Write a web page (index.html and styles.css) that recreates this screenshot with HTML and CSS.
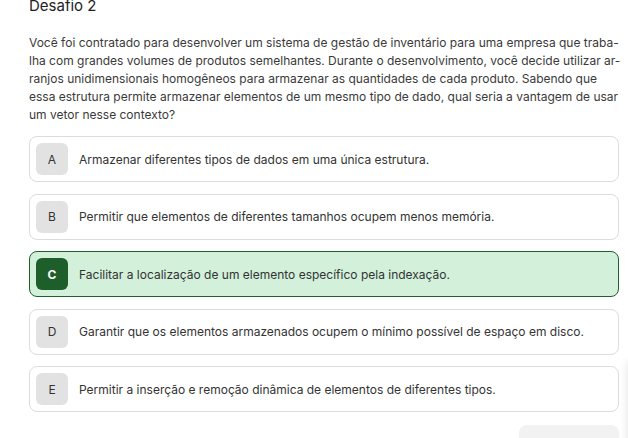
FILE: index.html
```html
<!DOCTYPE html>
<html lang="pt">
<head>
<meta charset="utf-8">
<link rel="stylesheet" href="styles.css">
</head>
<body>
<main class="page">
  <h2 class="title">Desafio 2</h2>
  <p class="question">Você foi contratado para desenvolver um sistema de gestão de inventário para uma empresa que traba-<br>lha com grandes volumes de produtos semelhantes. Durante o desenvolvimento, você decide utilizar ar-<br>ranjos unidimensionais homogêneos para armazenar as quantidades de cada produto. Sabendo que<br>essa estrutura permite armazenar elementos de um mesmo tipo de dado, qual seria a vantagem de usar<br>um vetor nesse contexto?</p>
  <ul class="options">
    <li class="option"><span class="badge">A</span><span class="label">Armazenar diferentes tipos de dados em uma única estrutura.</span></li>
    <li class="option"><span class="badge">B</span><span class="label">Permitir que elementos de diferentes tamanhos ocupem menos memória.</span></li>
    <li class="option selected"><span class="badge">C</span><span class="label">Facilitar a localização de um elemento específico pela indexação.</span></li>
    <li class="option"><span class="badge">D</span><span class="label">Garantir que os elementos armazenados ocupem o mínimo possível de espaço em disco.</span></li>
    <li class="option"><span class="badge">E</span><span class="label">Permitir a inserção e remoção dinâmica de elementos de diferentes tipos.</span></li>
  </ul>
  <div class="actions"><button class="submit">Responder</button></div>
</main>
<div class="edge-shadow"></div>
</body>
</html>
```
FILE: styles.css
```css
html, body {
  margin: 0;
  padding: 0;
  background: #ffffff;
  overflow: hidden;
}
body {
  font-family: Inter, "Noto Sans", sans-serif;
  color: #333333;
  height: 438px;
  position: relative;
}
.page {
  margin-top: -4px;
  padding: 0 9px 0 29px;
}
.title {
  margin: 0;
  font-size: 15px;
  line-height: 20px;
  font-weight: 400;
  color: #222222;
}
.question {
  margin: 18px 0 0;
  font-size: 12px;
  line-height: 18px;
  color: #3a3a3a;
  white-space: nowrap;
}
.options {
  list-style: none;
  margin: 12px 0 0;
  padding: 0;
  display: flex;
  flex-direction: column;
  gap: 11.5px;
}
.option {
  display: flex;
  align-items: center;
  gap: 11px;
  padding: 6px;
  border: 1px solid #dcdcdc;
  border-radius: 8px;
  background: #ffffff;
}
.badge {
  flex: none;
  width: 32px;
  height: 32px;
  border-radius: 6px;
  background: #e2e2e2;
  display: flex;
  align-items: center;
  justify-content: center;
  font-size: 12px;
  color: #333333;
}
.label {
  font-size: 12px;
  color: #333333;
  white-space: nowrap;
}
.option.selected {
  background: #d2f0da;
  border-color: #1f5f2b;
}
.option.selected .badge {
  background: #1e5e2a;
  color: #ffffff;
  font-weight: 700;
}
.actions {
  display: flex;
  justify-content: flex-end;
  margin-top: 13px;
}
.submit {
  width: 100px;
  height: 36px;
  border: none;
  border-radius: 8px;
  background: #f2f2f2;
  color: #9a9a9a;
  font-family: Inter, sans-serif;
  font-size: 12px;
  padding: 0;
}
.edge-shadow {
  position: absolute;
  right: -10px;
  top: 362px;
  width: 10px;
  height: 120px;
  box-shadow: 0 0 10px rgba(0, 0, 0, 0.12);
}
```
